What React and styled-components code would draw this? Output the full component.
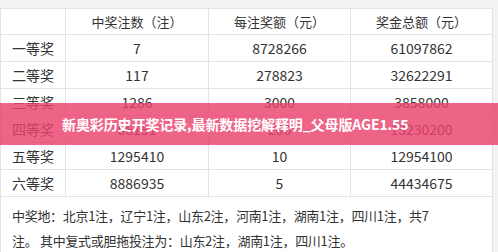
import React from "react";
import styled, { createGlobalStyle } from "styled-components";

const Global = createGlobalStyle`
  html, body { margin: 0; padding: 0; background: #f2f2f2; }
  body { font-family: "Noto Sans CJK SC", "Noto Sans", sans-serif; color: #333; }
`;

const Page = styled.div`
  position: relative;
  width: 498px;
  height: 252px;
  overflow: hidden;
  padding: 8px 5px 0 0;
  box-sizing: border-box;
  background: #f2f2f2;
`;

const Sheet = styled.div`
  background: #fff;
  border-left: 1px solid #e2e2e2;
  border-right: 1px solid #e2e2e2;
  height: 100%;
`;

const Grid = styled.div`
  display: grid;
  grid-template-columns: 64px 143px 142px 142px;
`;

const Cell = styled.div`
  height: ${(p) => (p.$head ? 26 : 27)}px;
  display: flex;
  align-items: center;
  justify-content: center;
  font-size: ${(p) => (p.$head ? 13 : 14)}px;
  color: #333;
  border-top: 1px solid #e3e3e3;
  border-left: ${(p) => (p.$first ? "none" : "1px solid #e3e3e3")};
  box-sizing: border-box;
  white-space: nowrap;
`;

const Note = styled.div`
  border-top: 1px solid #e3e3e3;
  padding: 6px 0 0 11px;
  font-size: 13px;
  letter-spacing: -0.3px;
  line-height: 25px;
  color: #333;
`;

const Banner = styled.div`
  position: absolute;
  left: 0;
  right: 0;
  top: 103px;
  height: 42px;
  background: rgba(234, 66, 108, 0.82);
  display: flex;
  align-items: center;
  padding-left: 62px;
  box-sizing: border-box;
  color: #fff;
  font-weight: 700;
  font-size: 14px;
  letter-spacing: -0.1px;
`;

const head = ["", "中奖注数（注）", "每注奖额（元）", "奖金总额（元）"];
const rows = [
  ["一等奖", "7", "8728266", "61097862"],
  ["二等奖", "117", "278823", "32622291"],
  ["三等奖", "1286", "3000", "3858000"],
  ["四等奖", "66151", "200", "13230200"],
  ["五等奖", "1295410", "10", "12954100"],
  ["六等奖", "8886935", "5", "44434675"],
];

export default function App() {
  return (
    <>
      <Global />
      <Page>
        <Sheet>
          <Grid>
            {head.map((h, i) => (
              <Cell key={i} $head $first={i === 0}>{h}</Cell>
            ))}
            {rows.map((r, ri) =>
              r.map((c, ci) => (
                <Cell key={ri + "-" + ci} $first={ci === 0}>{c}</Cell>
              ))
            )}
          </Grid>
          <Note>
            中奖地：北京1注，辽宁1注，山东2注，河南1注，湖南1注，四川1注，共7
            <br />
            注。 其中复式或胆拖投注为：山东2注，湖南1注，四川1注。
          </Note>
        </Sheet>
        <Banner>新奥彩历史开奖记录,最新数据挖解释明_父母版AGE1.55</Banner>
      </Page>
    </>
  );
}
